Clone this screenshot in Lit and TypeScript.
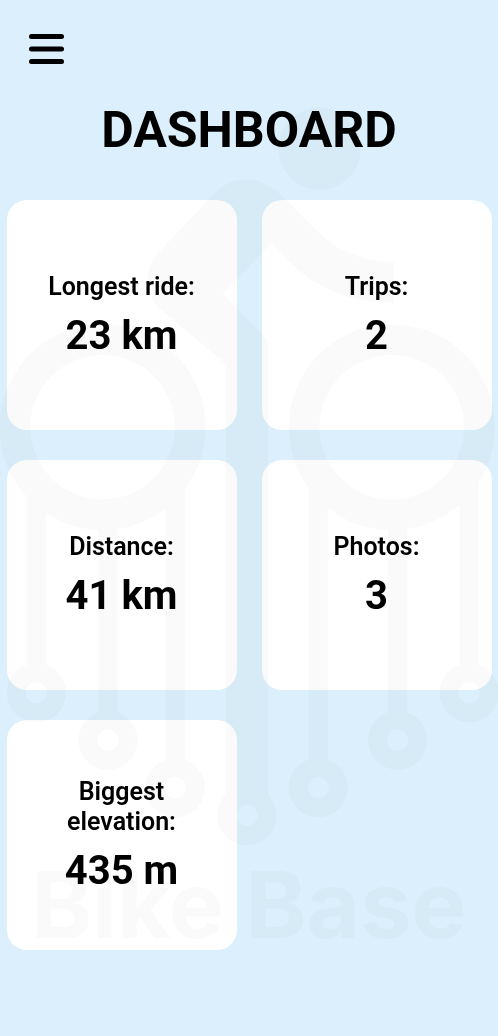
import { LitElement, html, css, svg } from "lit";
import { customElement, property } from "lit/decorators.js";

@customElement("stat-card")
class StatCard extends LitElement {
  @property() label = "";
  @property() value = "";

  static styles = css`
    :host {
      display: flex;
      flex-direction: column;
      align-items: center;
      justify-content: center;
      gap: 10px;
      box-sizing: border-box;
      width: 230px;
      height: 230px;
      padding: 1px 21px 0 20px;
      border-radius: 20px;
      background: #fff;
      text-align: center;
      color: #000;
    }
    .label {
      font-size: 25px;
      line-height: 30px;
      font-weight: 600;
    }
    .value {
      font-size: 40px;
      line-height: 47px;
      font-weight: 700;
    }
  `;

  render() {
    return html`
      <div class="label">${this.label}</div>
      <div class="value">${this.value}</div>
    `;
  }
}

@customElement("brand-watermark")
class BrandWatermark extends LitElement {
  static styles = css`
    :host {
      display: block;
      pointer-events: none;
      mix-blend-mode: multiply;
    }
    .art {
      display: block;
    }
    .page {
      fill: #fafbf7;
    }
    .card {
      fill: #fafafa;
    }
    .name {
      font-family: Inter, sans-serif;
      font-weight: 700;
      font-size: 92.2px;
    }
  `;

  private wheels = [102.6, 391.8];
  private stems = [
    { x: 36.4, top: 490, y: 692.7 },
    { x: 107.9, top: 520, y: 740.2 },
    { x: 175.3, top: 480, y: 787.7 },
    { x: 318.2, top: 480, y: 787.7 },
    { x: 397.6, top: 520, y: 740.2 },
    { x: 469.2, top: 480, y: 692.7 },
  ];
  private cards = [
    [7, 200],
    [262, 200],
    [7, 460],
    [262, 460],
    [7, 720],
  ];

  render() {
    return html`
      <svg class="art" width="498" height="1036" viewBox="0 0 498 1036">
        <pattern id="ink" patternUnits="userSpaceOnUse" width="498" height="1036">
          <rect class="page" width="498" height="1036" />
          ${this.cards.map(
            ([x, y]) => svg`<rect class="card" x=${x} y=${y} width="230" height="230" rx="20" />`
          )}
        </pattern>
        <mask id="cut" maskUnits="userSpaceOnUse" x="0" y="0" width="498" height="1036">
          <rect width="498" height="1036" fill="#fff" />
          ${this.wheels.map((x) => svg`<circle cx=${x} cy="427.2" r="72.3" fill="#000" />`)}
          ${this.stems.map((s) => svg`<circle cx=${s.x} cy=${s.y} r="10.6" fill="#000" />`)}
          <circle cx="247" cy="815.6" r="10.6" fill="#000" />
        </mask>
        <g mask="url(#cut)" fill="url(#ink)">
          <circle cx="319.4" cy="148.8" r="41.2" />
          <path
            d="M226 364 L159 308 C144 295 144 270 157 254 L213 195 C222 185 233 179.5 246 179.5 C264 179.5 277 190 288 201.5 L315 229 C337 251 362 262 393.7 262 V302.7 C343 302.7 310 284 284 256 L271.3 243.3 L222.6 293.8 L268 340.7 V815 H226 Z"
          />
          ${this.wheels.map((x) => svg`<circle cx=${x} cy="427.2" r="103" />`)}
          ${this.stems.map(
            (s) => svg`
              <rect x=${s.x - 9.5} y=${s.top} width="19" height=${s.y - s.top} />
              <circle cx=${s.x} cy=${s.y} r="29.6" />`
          )}
          <circle cx="247" cy="815.6" r="29.6" />
        </g>
        <text class="name" x="31.3" y="938" fill="url(#ink)">Bike Base</text>
      </svg>
    `;
  }
}

@customElement("app-root")
class AppRoot extends LitElement {
  static styles = css`
    :host {
      display: block;
      position: relative;
      box-sizing: border-box;
      width: 100%;
      height: 1036px;
      overflow: hidden;
      background: #dbeffd;
      font-family: Roboto, sans-serif;
    }
    .bar {
      padding: 34px 29px 0;
      height: 66px;
      box-sizing: border-box;
    }
    .menu {
      display: block;
      width: 35px;
      height: 30px;
      padding: 0;
      border: 0;
      background: none;
    }
    .icon {
      display: block;
    }
    .title {
      margin: 35px 0 0;
      height: 99px;
      font-size: 50px;
      line-height: 59px;
      font-weight: 700;
      text-align: center;
      color: #000;
    }
    .grid {
      display: grid;
      grid-template-columns: 230px 230px;
      gap: 30px 25px;
      padding-left: 7px;
    }
    .watermark {
      position: absolute;
      inset: 0;
    }
  `;

  private stats = [
    ["Longest ride:", "23 km"],
    ["Trips:", "2"],
    ["Distance:", "41 km"],
    ["Photos:", "3"],
    ["Biggest elevation:", "435 m"],
  ];

  render() {
    return html`
      <header class="bar">
        <button class="menu" aria-label="Menu">
          <svg class="icon" width="35" height="30" viewBox="0 0 35 30">
            <rect width="35" height="5" rx="2.5" />
            <rect y="12.5" width="35" height="5" rx="2.5" />
            <rect y="25" width="35" height="5" rx="2.5" />
          </svg>
        </button>
      </header>
      <h1 class="title">DASHBOARD</h1>
      <main class="grid">
        ${this.stats.map(
          ([label, value]) => html`<stat-card .label=${label} .value=${value}></stat-card>`
        )}
      </main>
      <brand-watermark class="watermark"></brand-watermark>
    `;
  }
}
